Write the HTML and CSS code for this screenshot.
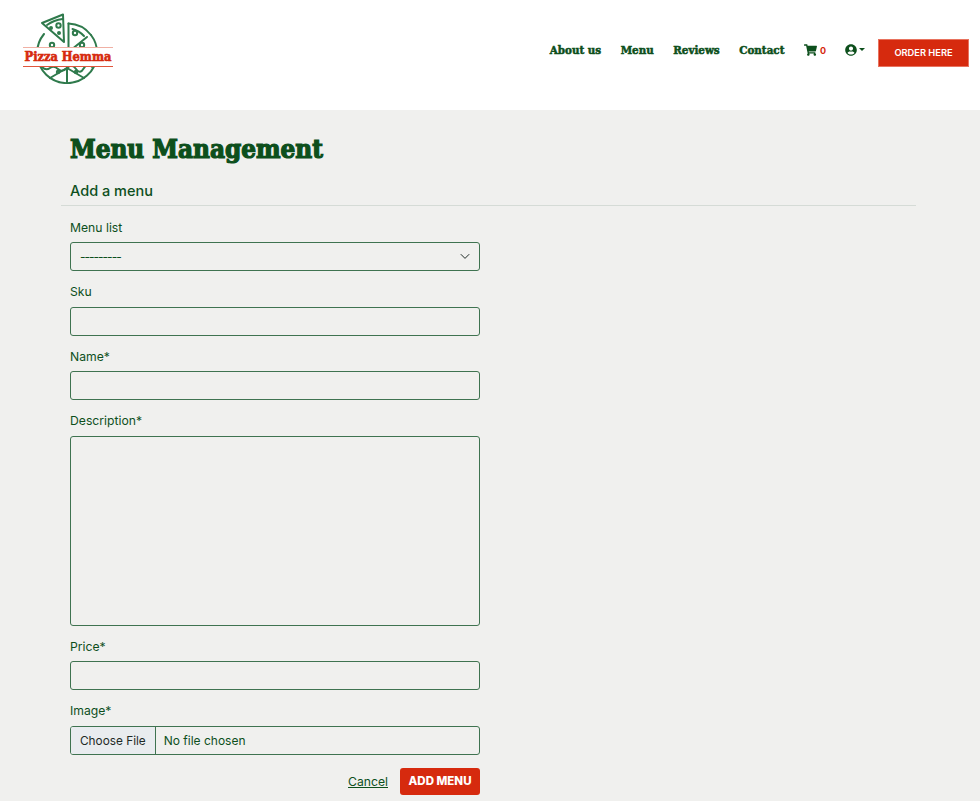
FILE: index.html
```html
<!DOCTYPE html>
<html lang="en">
<head>
    <meta charset="UTF-8">
    <meta name="viewport" content="width=device-width, initial-scale=1.0">
    <title>Menu Management - Pizza Hemma</title>
    <link rel="stylesheet" href="styles.css">
</head>
<body>
    <!-- Header -->
    <header class="site-header">
        <a class="logo" href="#">
            <svg class="logo-mark" width="90" height="72" viewBox="23 12 90 72" fill="none" stroke="#2f7a4c" stroke-width="2" stroke-linejoin="round" stroke-linecap="round">
                <!-- Whole pizza -->
                <path d="M44 34A30 30 0 1 0 91 35"/>
                <path d="M68.500 23.500A30 30 0 0 1 91 35"/>
                <path d="M68.500 23.500V52L87 37"/>
                <path d="M72.500 29A24 24 0 0 1 84 36"/>
                <path d="M67 66v17M67 68L50 78M67 68l17 10"/>
                <path d="M42 67q4 4 8 1t8 1 9-1 9 1 8-1 8-1"/>
                <circle cx="75" cy="33" r="2.200"/>
                <circle cx="82" cy="45" r="2.200"/>
                <circle cx="52" cy="45" r="2.200"/>
                <circle cx="58" cy="72" r="1.200"/>
                <circle cx="76" cy="72" r="1.200"/>
                <!-- Lifted slice -->
                <path d="M42 23L63 14.500L64 42Z"/>
                <path d="M47 25q7-5 15.500-6"/>
                <circle cx="58.500" cy="25.500" r="2.200"/>
                <circle cx="51" cy="28" r="1"/>
                <circle cx="59" cy="33" r="1"/>
            </svg>
            <span class="logo-band">Pizza Hemma</span>
        </a>
        <nav class="main-nav">
            <a class="nav-link" href="#">About us</a>
            <a class="nav-link" href="#">Menu</a>
            <a class="nav-link" href="#">Reviews</a>
            <a class="nav-link" href="#">Contact</a>
            <a class="cart-link" href="#">
                <svg width="13" height="12" viewBox="0 0 576 512" fill="#0d4f1c"><path d="M528 301.300l47.300-208C578.700 78.300 567.300 64 552 64H159.200l-9.200-44.800C147.800 8 137.900 0 126.500 0H24C10.700 0 0 10.700 0 24v16c0 13.300 10.700 24 24 24h69.900l70.200 343.400C147.300 417.100 136 435.200 136 456c0 30.900 25.100 56 56 56s56-25.100 56-56c0-15.700-6.400-29.800-16.800-40h209.600C430.400 426.200 424 440.300 424 456c0 30.900 25.100 56 56 56s56-25.100 56-56c0-22.200-12.900-41.300-31.600-50.400l5.500-24.400c3.400-15-8-29.200-23.400-29.200H218.100l-6.500-32h293c11.200 0 20.900-7.800 23.400-18.700z"/></svg>
                <span class="cart-count">0</span>
            </a>
            <a class="user-link" href="#">
                <svg width="12" height="12" viewBox="0 0 496 512" fill="#0d4f1c"><path d="M248 8C111 8 0 119 0 256s111 248 248 248 248-111 248-248S385 8 248 8zm0 96c48.600 0 88 39.400 88 88s-39.400 88-88 88-88-39.400-88-88 39.400-88 88-88zm0 344c-58.700 0-111.300-26.600-146.500-68.200 18.800-35.400 55.600-59.800 98.500-59.800 2.400 0 4.800.4 7.100 1.100 13 4.200 26.600 6.900 40.900 6.900 14.300 0 28-2.700 40.900-6.900 2.300-.7 4.700-1.100 7.100-1.100 42.900 0 79.700 24.400 98.500 59.800C359.300 421.400 306.700 448 248 448z"/></svg>
                <span class="caret"></span>
            </a>
            <a class="order-btn" href="#">ORDER HERE</a>
        </nav>
    </header>

    <!-- Content -->
    <main class="page">
        <h1 class="page-title">Menu Management</h1>
        <h2 class="section-title">Add a menu</h2>
        <form class="menu-form">
            <div class="field">
                <label for="menu-list">Menu list</label>
                <div class="select-wrap">
                    <select id="menu-list" class="control">
                        <option>---------</option>
                    </select>
                    <svg class="chevron" width="10" height="7" viewBox="0 0 10 7" fill="none" stroke="#1e2a26" stroke-width="1"><path d="M.8 1.200L5 5.400l4.200-4.200"/></svg>
                </div>
            </div>
            <div class="field">
                <label for="sku">Sku</label>
                <input id="sku" class="control" type="text">
            </div>
            <div class="field">
                <label for="name">Name*</label>
                <input id="name" class="control" type="text">
            </div>
            <div class="field">
                <label for="description">Description*</label>
                <textarea id="description" class="control control-area"></textarea>
            </div>
            <div class="field">
                <label for="price">Price*</label>
                <input id="price" class="control" type="text">
            </div>
            <div class="field">
                <label for="image">Image*</label>
                <input id="image" class="control control-file" type="file">
            </div>
            <div class="form-actions">
                <a class="cancel-link" href="#">Cancel</a>
                <button class="submit-btn" type="button">ADD MENU</button>
            </div>
        </form>
    </main>
</body>
</html>
```

FILE: styles.css
```css
* {
    box-sizing: border-box;
}
body {
    margin: 0;
    font-family: "Inter", "Liberation Sans", sans-serif;
    color: #0d4f1c;
    background-color: #f0f0ee;
}
a {
    color: inherit;
    text-decoration: none;
}

/* Header */
.site-header {
    display: flex;
    justify-content: space-between;
    align-items: flex-start;
    height: 110px;
    padding: 12px 11px 0 23px;
    background-color: #fff;
}
.logo {
    position: relative;
    display: block;
    width: 90px;
    height: 72px;
}
.logo-mark {
    display: block;
}
.logo-band {
    position: absolute;
    top: 35px;
    left: 0;
    width: 90px;
    height: 20px;
    border-top: 1px solid #f0b0a4;
    border-bottom: 1px solid #e0563c;
    background-color: #fff;
    color: #d62a0e;
    font-family: "DejaVu Serif Condensed", "DejaVu Serif", serif;
    font-size: 12.700px;
    font-weight: 700;
    -webkit-text-stroke: 0.6px #d62a0e;
    line-height: 18px;
    text-align: center;
    white-space: nowrap;
}
.main-nav {
    display: flex;
    align-items: center;
    margin-top: 27px;
}
.nav-link {
    margin-right: 19.500px;
    margin-top: -7px;
    font-family: "DejaVu Serif Condensed", "DejaVu Serif", serif;
    font-size: 11.500px;
    font-weight: 700;
    -webkit-text-stroke: 0.5px #0d4f1c;
    line-height: 22px;
}
.cart-link {
    display: flex;
    align-items: center;
    gap: 3px;
    margin-right: 19px;
    margin-top: -6px;
}
.cart-count {
    color: #d62a0e;
    font-size: 9px;
    font-weight: 700;
}
.user-link {
    display: flex;
    align-items: center;
    gap: 2px;
    margin-right: 13px;
    margin-top: -7px;
}
.caret {
    width: 0;
    height: 0;
    border-top: 3px solid #0d4f1c;
    border-left: 3px solid transparent;
    border-right: 3px solid transparent;
}
.order-btn {
    width: 91px;
    height: 28px;
    border: 1px solid #e8735f;
    background-color: #d62a0e;
    color: #fff;
    font-size: 9.300px;
    font-weight: 600;
    line-height: 26px;
    text-align: center;
}

/* Content */
.page {
    width: 855px;
    margin-left: 61px;
    padding-bottom: 20px;
}
.page-title {
    margin: 0;
    padding: 22px 0 0 9px;
    font-family: "DejaVu Serif Condensed", "DejaVu Serif", serif;
    font-size: 25.800px;
    font-weight: 700;
    -webkit-text-stroke: 1.2px #0d4f1c;
    line-height: 34px;
}
.section-title {
    margin: 0;
    padding: 15px 0 4px 9px;
    border-bottom: 1px solid #d5dbd6;
    font-size: 14.500px;
    font-weight: 500;
    line-height: 20px;
}
.menu-form {
    display: flex;
    flex-direction: column;
    width: 410px;
    margin-left: 9px;
    padding-top: 13.500px;
}
.field {
    display: flex;
    flex-direction: column;
    margin-bottom: 13px;
}
.field label {
    margin-bottom: 6.500px;
    font-size: 12.200px;
    line-height: 16px;
}
.control {
    display: block;
    width: 100%;
    height: 29px;
    padding: 0 9px;
    border: 1px solid #3f7350;
    border-radius: 3px;
    background-color: #f0f0ee;
    color: #0d4f1c;
    font-family: inherit;
    font-size: 12px;
    outline: none;
}
select.control {
    appearance: none;
    letter-spacing: -1px;
}
.select-wrap {
    position: relative;
}
.chevron {
    position: absolute;
    top: 11px;
    right: 10px;
}
.control-area {
    height: 190px;
    resize: none;
}
.control-file {
    padding: 0;
    line-height: 27px;
}
.control-file::file-selector-button {
    height: 27px;
    margin-right: 8px;
    padding: 0 9px;
    border: none;
    border-right: 1px solid #3f7350;
    background-color: #e9ecef;
    color: #1e2a26;
    font-family: inherit;
    font-size: 11.800px;
}
.form-actions {
    display: flex;
    justify-content: flex-end;
    align-items: center;
    gap: 12px;
}
.cancel-link {
    font-size: 12.200px;
    text-decoration: underline;
}
.submit-btn {
    width: 80px;
    height: 27px;
    padding: 0;
    border: none;
    border-radius: 3px;
    background-color: #d62a0e;
    color: #fff;
    font-family: inherit;
    font-size: 11.500px;
    font-weight: 800;
}
```
